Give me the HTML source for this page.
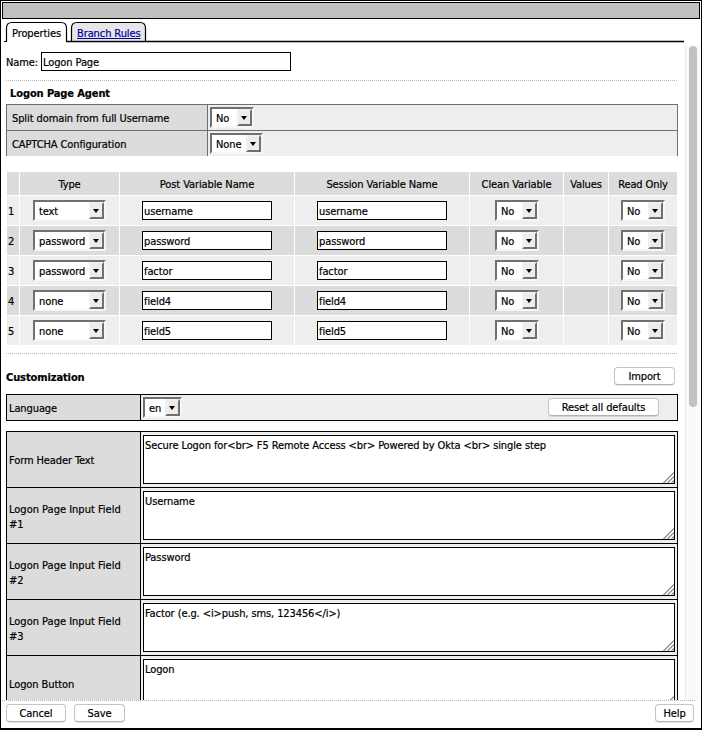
<!DOCTYPE html>
<html>
<head>
<meta charset="utf-8">
<title>Logon Page</title>
<style>
html,body{margin:0;padding:0;background:#fff;}
body{width:702px;height:730px;overflow:hidden;position:relative;
  font-family:"DejaVu Sans Condensed","Liberation Sans",sans-serif;font-size:11px;letter-spacing:-0.1px;color:#000;line-height:13px;-webkit-text-stroke:0.2px;}
#win{position:absolute;left:0;top:0;width:702px;height:730px;box-sizing:border-box;border:1px solid #000;border-bottom-width:2px;overflow:hidden;}
.abs,.t,.sel,.inp,.ta,.btn,.cell{position:absolute;box-sizing:border-box;}
.t{white-space:nowrap;height:13px;line-height:13px;}
.b{font-weight:bold;}
.c{text-align:center;}
#bar{position:absolute;left:1px;top:1px;width:698px;height:17px;box-sizing:border-box;border:1px solid #000;background:#c0c0c0;}
.dot{position:absolute;height:1px;background:repeating-linear-gradient(to right,#b4b4b4 0,#b4b4b4 1px,transparent 1px,transparent 2px);}
.sel{height:21px;border:2px solid;border-color:#707070 #f6f6f6 #f6f6f6 #707070;background:#fff;padding:3px 0 0 4px;line-height:13px;white-space:nowrap;}
.sel i{position:absolute;right:0;top:0;bottom:0;width:15px;box-sizing:border-box;background:#ececec;border:2px solid;border-color:#f0f0f0 #707070 #707070 #f0f0f0;}
.sel i:after{content:"";position:absolute;left:2px;top:5px;border-left:3.5px solid transparent;border-right:3.5px solid transparent;border-top:4px solid #000;}
.inp{height:19px;border:1px solid #000;background:#fff;padding:3px 0 0 1px;line-height:13px;white-space:nowrap;}
.ta{height:49px;border:1px solid #000;background:#fff;padding:3px 0 0 1px;line-height:13px;white-space:nowrap;}
.ta svg{position:absolute;right:0;bottom:0;}
.btn{height:18px;border:1px solid #c4c4c4;border-bottom-color:#b2b2b2;border-radius:4px;background:#fff;text-align:center;line-height:17px;box-shadow:0 1px 0 rgba(0,0,0,0.10);}
.hd{background:#dcdcdc;}
.lt{background:#eeeeee;}
a{color:#0000a0;text-decoration:underline;}
</style>
</head>
<body>
<div id="win">
<div id="bar"></div>

<!-- tabs -->
<svg class="abs" style="left:-1px;top:-1px" width="702" height="60" viewBox="0 0 702 60">
  <path d="M71.5,40 L71.5,28 Q71.5,22.5 77,22.5 L140,22.5 Q145.5,22.5 145.5,28 L145.5,40 Z" fill="#e6e6e6" stroke="none"/>
  <path d="M71.5,41.5 L71.5,28 Q71.5,22.5 77,22.5 L140,22.5 Q145.5,22.5 145.5,28 L145.5,41.5" fill="none" stroke="#000" stroke-width="1.2"/>
  <path d="M66,41.4 L684,41.4" stroke="#000" stroke-width="1.5" fill="none"/>
  <path d="M4,41.5 L6.5,41.5 L6.5,28 Q6.5,22.5 12,22.5 L61,22.5 Q66.5,22.5 66.5,28 L66.5,41.5" fill="#fff" stroke="#000" stroke-width="1.2"/>
</svg>
<div class="t" style="left:11px;top:26px;">Properties</div>
<div class="t" style="left:76px;top:26px;"><a>Branch Rules</a></div>

<!-- name -->
<div class="t" style="left:5px;top:55px;">Name:</div>
<div class="inp" style="left:40px;top:51px;width:250px;">Logon Page</div>
<div class="dot" style="left:5px;top:79px;width:671px;"></div>

<!-- agent -->
<div class="t b" style="left:9px;top:86px;">Logon Page Agent</div>
<div class="abs" style="left:5px;top:103px;width:672px;height:52px;background:#6e6e6e;"></div>
<div class="cell hd" style="left:6px;top:104px;width:200px;height:25px;"></div>
<div class="cell lt" style="left:207px;top:104px;width:469px;height:25px;"></div>
<div class="cell hd" style="left:6px;top:130px;width:200px;height:25px;"></div>
<div class="cell lt" style="left:207px;top:130px;width:469px;height:25px;"></div>
<div class="t" style="left:11px;top:111px;">Split domain from full Username</div>
<div class="t" style="left:11px;top:137px;">CAPTCHA Configuration</div>
<div class="sel" style="left:209px;top:106px;width:44px;">No<i></i></div>
<div class="sel" style="left:209px;top:132px;width:53px;">None<i></i></div>

<!-- variables table -->
<div class="abs" style="left:5px;top:170px;width:672px;height:175px;background:#fff;"></div>
<!-- header -->
<div class="cell hd" style="left:6px;top:171px;width:12px;height:23px;"></div>
<div class="cell hd t c" style="left:19px;top:171px;width:99px;height:23px;line-height:25px;">Type</div>
<div class="cell hd t c" style="left:119px;top:171px;width:174px;height:23px;line-height:25px;">Post Variable Name</div>
<div class="cell hd t c" style="left:294px;top:171px;width:174px;height:23px;line-height:25px;">Session Variable Name</div>
<div class="cell hd t c" style="left:469px;top:171px;width:93px;height:23px;line-height:25px;">Clean Variable</div>
<div class="cell hd t c" style="left:563px;top:171px;width:44px;height:23px;line-height:25px;">Values</div>
<div class="cell hd t c" style="left:608px;top:171px;width:68px;height:23px;line-height:25px;">Read Only</div>

<!-- row 1 -->
<div class="cell lt t" style="left:6px;top:195px;width:12px;height:29px;line-height:31px;padding-left:1px;">1</div>
<div class="cell lt" style="left:19px;top:195px;width:99px;height:29px;"></div>
<div class="cell lt" style="left:119px;top:195px;width:174px;height:29px;"></div>
<div class="cell lt" style="left:294px;top:195px;width:174px;height:29px;"></div>
<div class="cell lt" style="left:469px;top:195px;width:93px;height:29px;"></div>
<div class="cell lt" style="left:563px;top:195px;width:44px;height:29px;"></div>
<div class="cell lt" style="left:608px;top:195px;width:68px;height:29px;"></div>
<div class="sel" style="left:32px;top:199px;width:73px;">text<i></i></div>
<div class="inp" style="left:141px;top:200px;width:130px;">username</div>
<div class="inp" style="left:316px;top:200px;width:130px;">username</div>
<div class="sel" style="left:494px;top:199px;width:44px;">No<i></i></div>
<div class="sel" style="left:620px;top:199px;width:44px;">No<i></i></div>

<!-- row 2 -->
<div class="cell hd t" style="left:6px;top:225px;width:12px;height:29px;line-height:31px;padding-left:1px;">2</div>
<div class="cell hd" style="left:19px;top:225px;width:99px;height:29px;"></div>
<div class="cell hd" style="left:119px;top:225px;width:174px;height:29px;"></div>
<div class="cell hd" style="left:294px;top:225px;width:174px;height:29px;"></div>
<div class="cell hd" style="left:469px;top:225px;width:93px;height:29px;"></div>
<div class="cell hd" style="left:563px;top:225px;width:44px;height:29px;"></div>
<div class="cell hd" style="left:608px;top:225px;width:68px;height:29px;"></div>
<div class="sel" style="left:32px;top:229px;width:73px;">password<i></i></div>
<div class="inp" style="left:141px;top:230px;width:130px;">password</div>
<div class="inp" style="left:316px;top:230px;width:130px;">password</div>
<div class="sel" style="left:494px;top:229px;width:44px;">No<i></i></div>
<div class="sel" style="left:620px;top:229px;width:44px;">No<i></i></div>

<!-- row 3 -->
<div class="cell lt t" style="left:6px;top:255px;width:12px;height:29px;line-height:31px;padding-left:1px;">3</div>
<div class="cell lt" style="left:19px;top:255px;width:99px;height:29px;"></div>
<div class="cell lt" style="left:119px;top:255px;width:174px;height:29px;"></div>
<div class="cell lt" style="left:294px;top:255px;width:174px;height:29px;"></div>
<div class="cell lt" style="left:469px;top:255px;width:93px;height:29px;"></div>
<div class="cell lt" style="left:563px;top:255px;width:44px;height:29px;"></div>
<div class="cell lt" style="left:608px;top:255px;width:68px;height:29px;"></div>
<div class="sel" style="left:32px;top:259px;width:73px;">password<i></i></div>
<div class="inp" style="left:141px;top:260px;width:130px;">factor</div>
<div class="inp" style="left:316px;top:260px;width:130px;">factor</div>
<div class="sel" style="left:494px;top:259px;width:44px;">No<i></i></div>
<div class="sel" style="left:620px;top:259px;width:44px;">No<i></i></div>

<!-- row 4 -->
<div class="cell hd t" style="left:6px;top:285px;width:12px;height:29px;line-height:31px;padding-left:1px;">4</div>
<div class="cell hd" style="left:19px;top:285px;width:99px;height:29px;"></div>
<div class="cell hd" style="left:119px;top:285px;width:174px;height:29px;"></div>
<div class="cell hd" style="left:294px;top:285px;width:174px;height:29px;"></div>
<div class="cell hd" style="left:469px;top:285px;width:93px;height:29px;"></div>
<div class="cell hd" style="left:563px;top:285px;width:44px;height:29px;"></div>
<div class="cell hd" style="left:608px;top:285px;width:68px;height:29px;"></div>
<div class="sel" style="left:32px;top:289px;width:73px;">none<i></i></div>
<div class="inp" style="left:141px;top:290px;width:130px;">field4</div>
<div class="inp" style="left:316px;top:290px;width:130px;">field4</div>
<div class="sel" style="left:494px;top:289px;width:44px;">No<i></i></div>
<div class="sel" style="left:620px;top:289px;width:44px;">No<i></i></div>

<!-- row 5 -->
<div class="cell lt t" style="left:6px;top:315px;width:12px;height:29px;line-height:31px;padding-left:1px;">5</div>
<div class="cell lt" style="left:19px;top:315px;width:99px;height:29px;"></div>
<div class="cell lt" style="left:119px;top:315px;width:174px;height:29px;"></div>
<div class="cell lt" style="left:294px;top:315px;width:174px;height:29px;"></div>
<div class="cell lt" style="left:469px;top:315px;width:93px;height:29px;"></div>
<div class="cell lt" style="left:563px;top:315px;width:44px;height:29px;"></div>
<div class="cell lt" style="left:608px;top:315px;width:68px;height:29px;"></div>
<div class="sel" style="left:32px;top:319px;width:73px;">none<i></i></div>
<div class="inp" style="left:141px;top:320px;width:130px;">field5</div>
<div class="inp" style="left:316px;top:320px;width:130px;">field5</div>
<div class="sel" style="left:494px;top:319px;width:44px;">No<i></i></div>
<div class="sel" style="left:620px;top:319px;width:44px;">No<i></i></div>

<div class="dot" style="left:5px;top:352px;width:671px;"></div>

<!-- customization -->
<div class="t b" style="left:5px;top:370px;">Customization</div>
<div class="btn" style="left:613px;top:366px;width:61px;">Import</div>

<div class="abs" style="left:5px;top:393px;width:672px;height:27px;background:#000;"></div>
<div class="cell hd" style="left:6px;top:394px;width:133px;height:25px;"></div>
<div class="cell lt" style="left:140px;top:394px;width:536px;height:25px;"></div>
<div class="t" style="left:8px;top:401px;">Language</div>
<div class="sel" style="left:142px;top:396px;width:39px;">en<i></i></div>
<div class="btn" style="left:547px;top:397px;width:111px;height:18px;line-height:17px;">Reset all defaults</div>

<!-- text table -->
<div class="abs" style="left:5px;top:430px;width:672px;height:300px;background:#000;"></div>
<div class="cell hd" style="left:6px;top:431px;width:133px;height:55px;"></div>
<div class="cell lt" style="left:140px;top:431px;width:536px;height:55px;"></div>
<div class="cell hd" style="left:6px;top:487px;width:133px;height:55px;"></div>
<div class="cell lt" style="left:140px;top:487px;width:536px;height:55px;"></div>
<div class="cell hd" style="left:6px;top:543px;width:133px;height:55px;"></div>
<div class="cell lt" style="left:140px;top:543px;width:536px;height:55px;"></div>
<div class="cell hd" style="left:6px;top:599px;width:133px;height:55px;"></div>
<div class="cell lt" style="left:140px;top:599px;width:536px;height:55px;"></div>
<div class="cell hd" style="left:6px;top:655px;width:133px;height:55px;"></div>
<div class="cell lt" style="left:140px;top:655px;width:536px;height:55px;"></div>

<div class="t" style="left:8px;top:453px;">Form Header Text</div>
<div class="t" style="left:8px;top:502px;letter-spacing:0;">Logon Page Input Field</div>
<div class="t" style="left:8px;top:517px;">#1</div>
<div class="t" style="left:8px;top:558px;letter-spacing:0;">Logon Page Input Field</div>
<div class="t" style="left:8px;top:573px;">#2</div>
<div class="t" style="left:8px;top:614px;letter-spacing:0;">Logon Page Input Field</div>
<div class="t" style="left:8px;top:629px;">#3</div>
<div class="t" style="left:8px;top:677px;">Logon Button</div>

<div class="ta" style="left:142px;top:434px;width:532px;">Secure Logon for&lt;br&gt; F5 Remote Access &lt;br&gt; Powered by Okta &lt;br&gt; single step<svg width="11" height="11" viewBox="0 0 11 11"><path d="M0.5,11 L11,0.5 M4.5,11 L11,4.5 M8.5,11 L11,8.5" stroke="#858585" stroke-width="1.2" fill="none"/></svg></div>
<div class="ta" style="left:142px;top:490px;width:532px;">Username<svg width="11" height="11" viewBox="0 0 11 11"><path d="M0.5,11 L11,0.5 M4.5,11 L11,4.5 M8.5,11 L11,8.5" stroke="#858585" stroke-width="1.2" fill="none"/></svg></div>
<div class="ta" style="left:142px;top:546px;width:532px;">Password<svg width="11" height="11" viewBox="0 0 11 11"><path d="M0.5,11 L11,0.5 M4.5,11 L11,4.5 M8.5,11 L11,8.5" stroke="#858585" stroke-width="1.2" fill="none"/></svg></div>
<div class="ta" style="left:142px;top:602px;width:532px;">Factor (e.g. &lt;i&gt;push, sms, 123456&lt;/i&gt;)<svg width="11" height="11" viewBox="0 0 11 11"><path d="M0.5,11 L11,0.5 M4.5,11 L11,4.5 M8.5,11 L11,8.5" stroke="#858585" stroke-width="1.2" fill="none"/></svg></div>
<div class="ta" style="left:142px;top:658px;width:532px;">Logon<svg width="11" height="11" viewBox="0 0 11 11"><path d="M0.5,11 L11,0.5 M4.5,11 L11,4.5 M8.5,11 L11,8.5" stroke="#858585" stroke-width="1.2" fill="none"/></svg></div>

<!-- scrollbar -->
<div class="abs" style="left:684px;top:44px;width:15px;height:655px;background:#fafafa;border-left:1px solid #e8e8e8;"></div>
<div class="abs" style="left:688px;top:45px;width:8px;height:361px;border-radius:4px;background:#c1c1c1;"></div>

<!-- footer -->
<div class="abs" style="left:1px;top:699px;width:699px;height:29px;background:#fff;"></div>
<div class="dot" style="left:1px;top:699px;width:694px;"></div>
<div class="btn" style="left:5px;top:703px;width:60px;">Cancel</div>
<div class="btn" style="left:73px;top:703px;width:51px;">Save</div>
<div class="btn" style="left:654px;top:703px;width:39px;">Help</div>

</div>
</body>
</html>
